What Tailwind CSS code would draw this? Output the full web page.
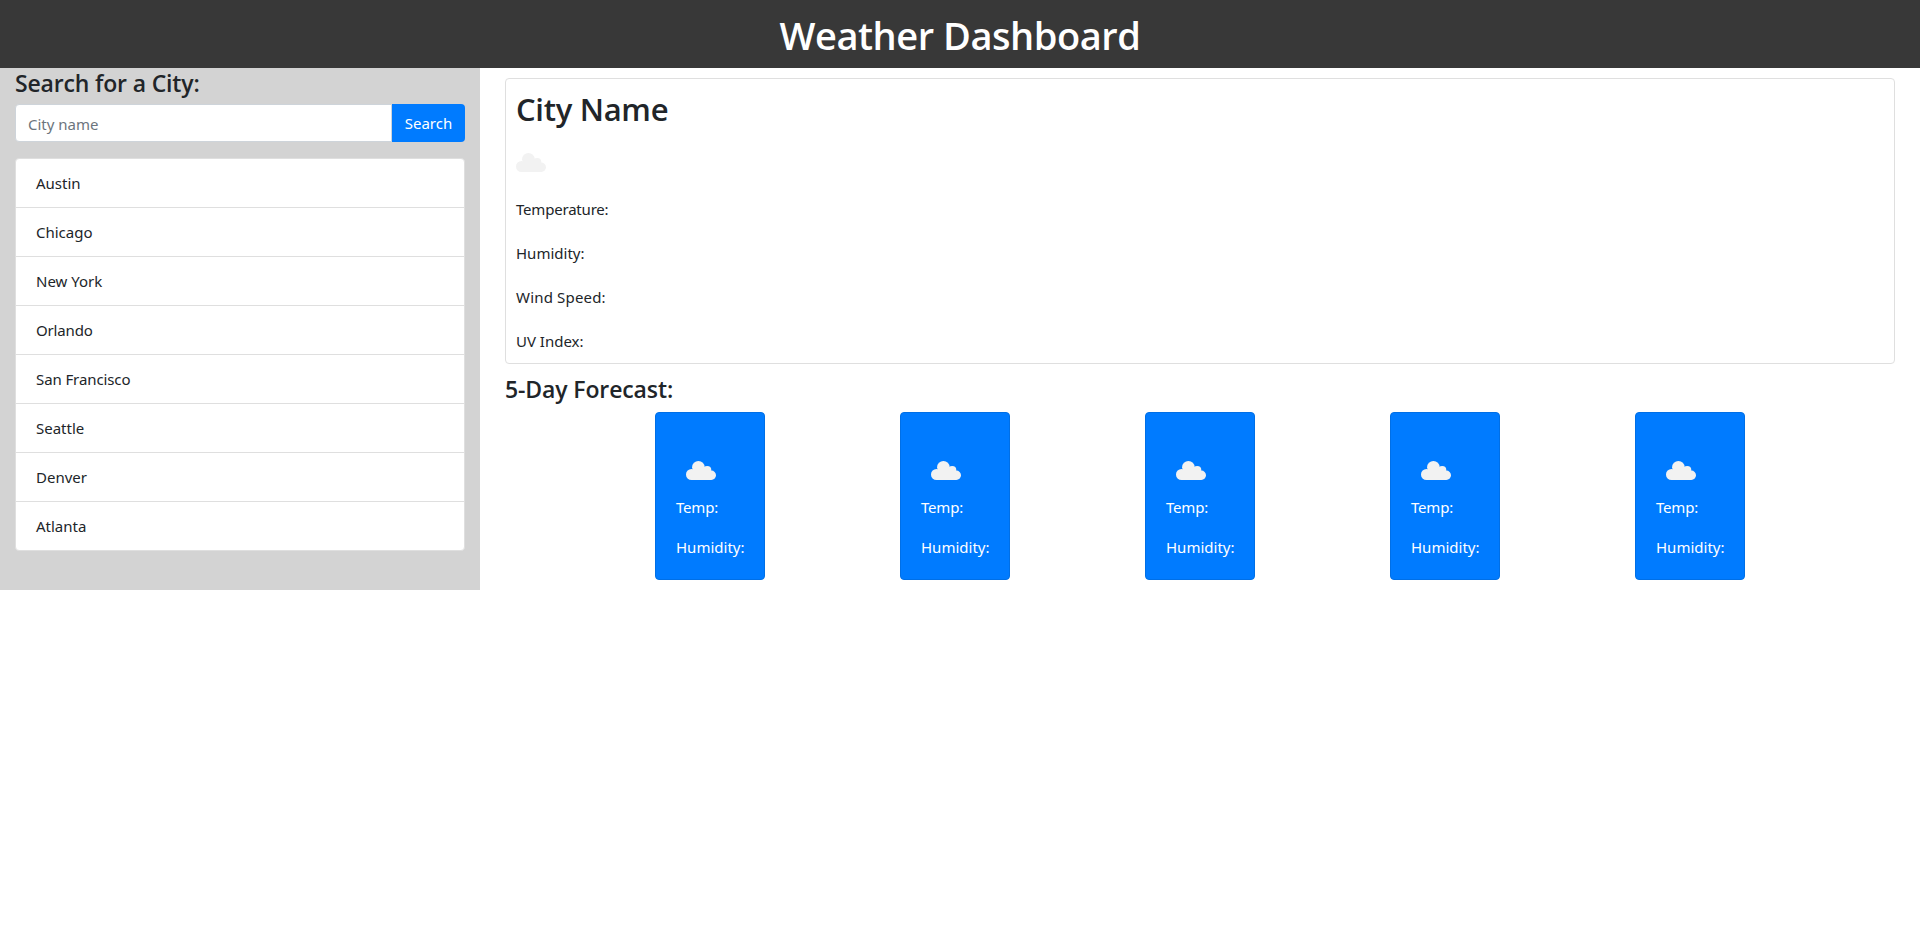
<!DOCTYPE html>
<html lang="en">
<head>
<meta charset="utf-8">
<title>Weather Dashboard</title>
<script src="https://cdn.jsdelivr.net/npm/@tailwindcss/browser@4"></script>
</head>
<body class="bg-white font-['Noto_Sans',sans-serif] text-[15px] leading-6 text-[#212529]">
<svg class="hidden">
  <symbol id="cloud" viewBox="0 0 30 19">
    <g fill="#f2f2f2">
      <circle cx="5.5" cy="13.5" r="5.5"/>
      <circle cx="12.4" cy="6.3" r="6.3"/>
      <circle cx="21.2" cy="9" r="4.1"/>
      <circle cx="25.3" cy="14.3" r="4.7"/>
      <path d="M5.5 19V9H21L25.3 12V19Z"/>
    </g>
  </symbol>
</svg>
<header class="flex h-17 justify-center bg-[#383838] pt-[11px]">
  <h1 class="font-['Open_Sans',sans-serif] text-[38px] leading-12 font-semibold tracking-[-0.45px] text-white">Weather Dashboard</h1>
</header>
<main class="flex items-start">
  <aside class="h-[522px] w-[480px] bg-[#d3d3d3] px-[15px] pt-px">
    <h4 class="mb-1.5 font-['Open_Sans',sans-serif] text-[23px] leading-[29px] font-semibold tracking-[-0.16px]">Search for a City:</h4>
    <form class="mb-4 flex h-[38px]">
      <input class="min-w-0 flex-1 rounded-l border border-[#ced4da] bg-white px-3 pt-0.5 placeholder:text-[#6c757d]" placeholder="City name">
      <button type="button" class="w-[73px] rounded-r bg-[#007bff] text-white">Search</button>
    </form>
    <ul class="divide-y divide-[#dfdfdf] rounded border border-[#dfdfdf] bg-white">
      <li class="h-[49px] px-5 py-3">Austin</li>
      <li class="h-[49px] px-5 py-3">Chicago</li>
      <li class="h-[49px] px-5 py-3">New York</li>
      <li class="h-[49px] px-5 py-3 tracking-[-0.15px]">Orlando</li>
      <li class="h-[49px] px-5 py-3 tracking-[-0.1px]">San Francisco</li>
      <li class="h-[49px] px-5 py-3">Seattle</li>
      <li class="h-[49px] px-5 py-3">Denver</li>
      <li class="h-12 px-5 py-3">Atlanta</li>
    </ul>
  </aside>
  <div class="flex-1 px-[25px] pt-2.5">
    <section class="h-[286px] rounded border border-[#dfdfdf] px-2.5 pt-[11px]">
      <h2 class="font-['Open_Sans',sans-serif] text-[31px] leading-[38px] font-semibold tracking-[-0.3px]">City Name</h2>
      <svg class="mt-[25px] mb-[25px] h-[19px] w-[30px]"><use href="#cloud"/></svg>
      <div class="flex flex-col gap-5">
        <p class="tracking-[-0.2px]">Temperature:</p>
        <p>Humidity:</p>
        <p class="tracking-[0.18px]">Wind Speed:</p>
        <p>UV Index:</p>
      </div>
    </section>
    <h4 class="mt-[11px] mb-2 font-['Open_Sans',sans-serif] text-[23px] leading-[29px] font-semibold tracking-[-0.12px]">5-Day Forecast:</h4>
    <section class="ml-[150px] flex gap-[135px]">
      <div class="h-[168px] w-[110px] rounded border border-[#006fe6] bg-[#007bff] px-5 pt-12 text-white"><svg class="ml-2.5 h-[19px] w-[30px]"><use href="#cloud"/></svg><p class="mt-[15px] tracking-[-0.2px]">Temp:</p><p class="mt-4">Humidity:</p></div>
      <div class="h-[168px] w-[110px] rounded border border-[#006fe6] bg-[#007bff] px-5 pt-12 text-white"><svg class="ml-2.5 h-[19px] w-[30px]"><use href="#cloud"/></svg><p class="mt-[15px] tracking-[-0.2px]">Temp:</p><p class="mt-4">Humidity:</p></div>
      <div class="h-[168px] w-[110px] rounded border border-[#006fe6] bg-[#007bff] px-5 pt-12 text-white"><svg class="ml-2.5 h-[19px] w-[30px]"><use href="#cloud"/></svg><p class="mt-[15px] tracking-[-0.2px]">Temp:</p><p class="mt-4">Humidity:</p></div>
      <div class="h-[168px] w-[110px] rounded border border-[#006fe6] bg-[#007bff] px-5 pt-12 text-white"><svg class="ml-2.5 h-[19px] w-[30px]"><use href="#cloud"/></svg><p class="mt-[15px] tracking-[-0.2px]">Temp:</p><p class="mt-4">Humidity:</p></div>
      <div class="h-[168px] w-[110px] rounded border border-[#006fe6] bg-[#007bff] px-5 pt-12 text-white"><svg class="ml-2.5 h-[19px] w-[30px]"><use href="#cloud"/></svg><p class="mt-[15px] tracking-[-0.2px]">Temp:</p><p class="mt-4">Humidity:</p></div>
    </section>
  </div>
</main>
</body>
</html>
